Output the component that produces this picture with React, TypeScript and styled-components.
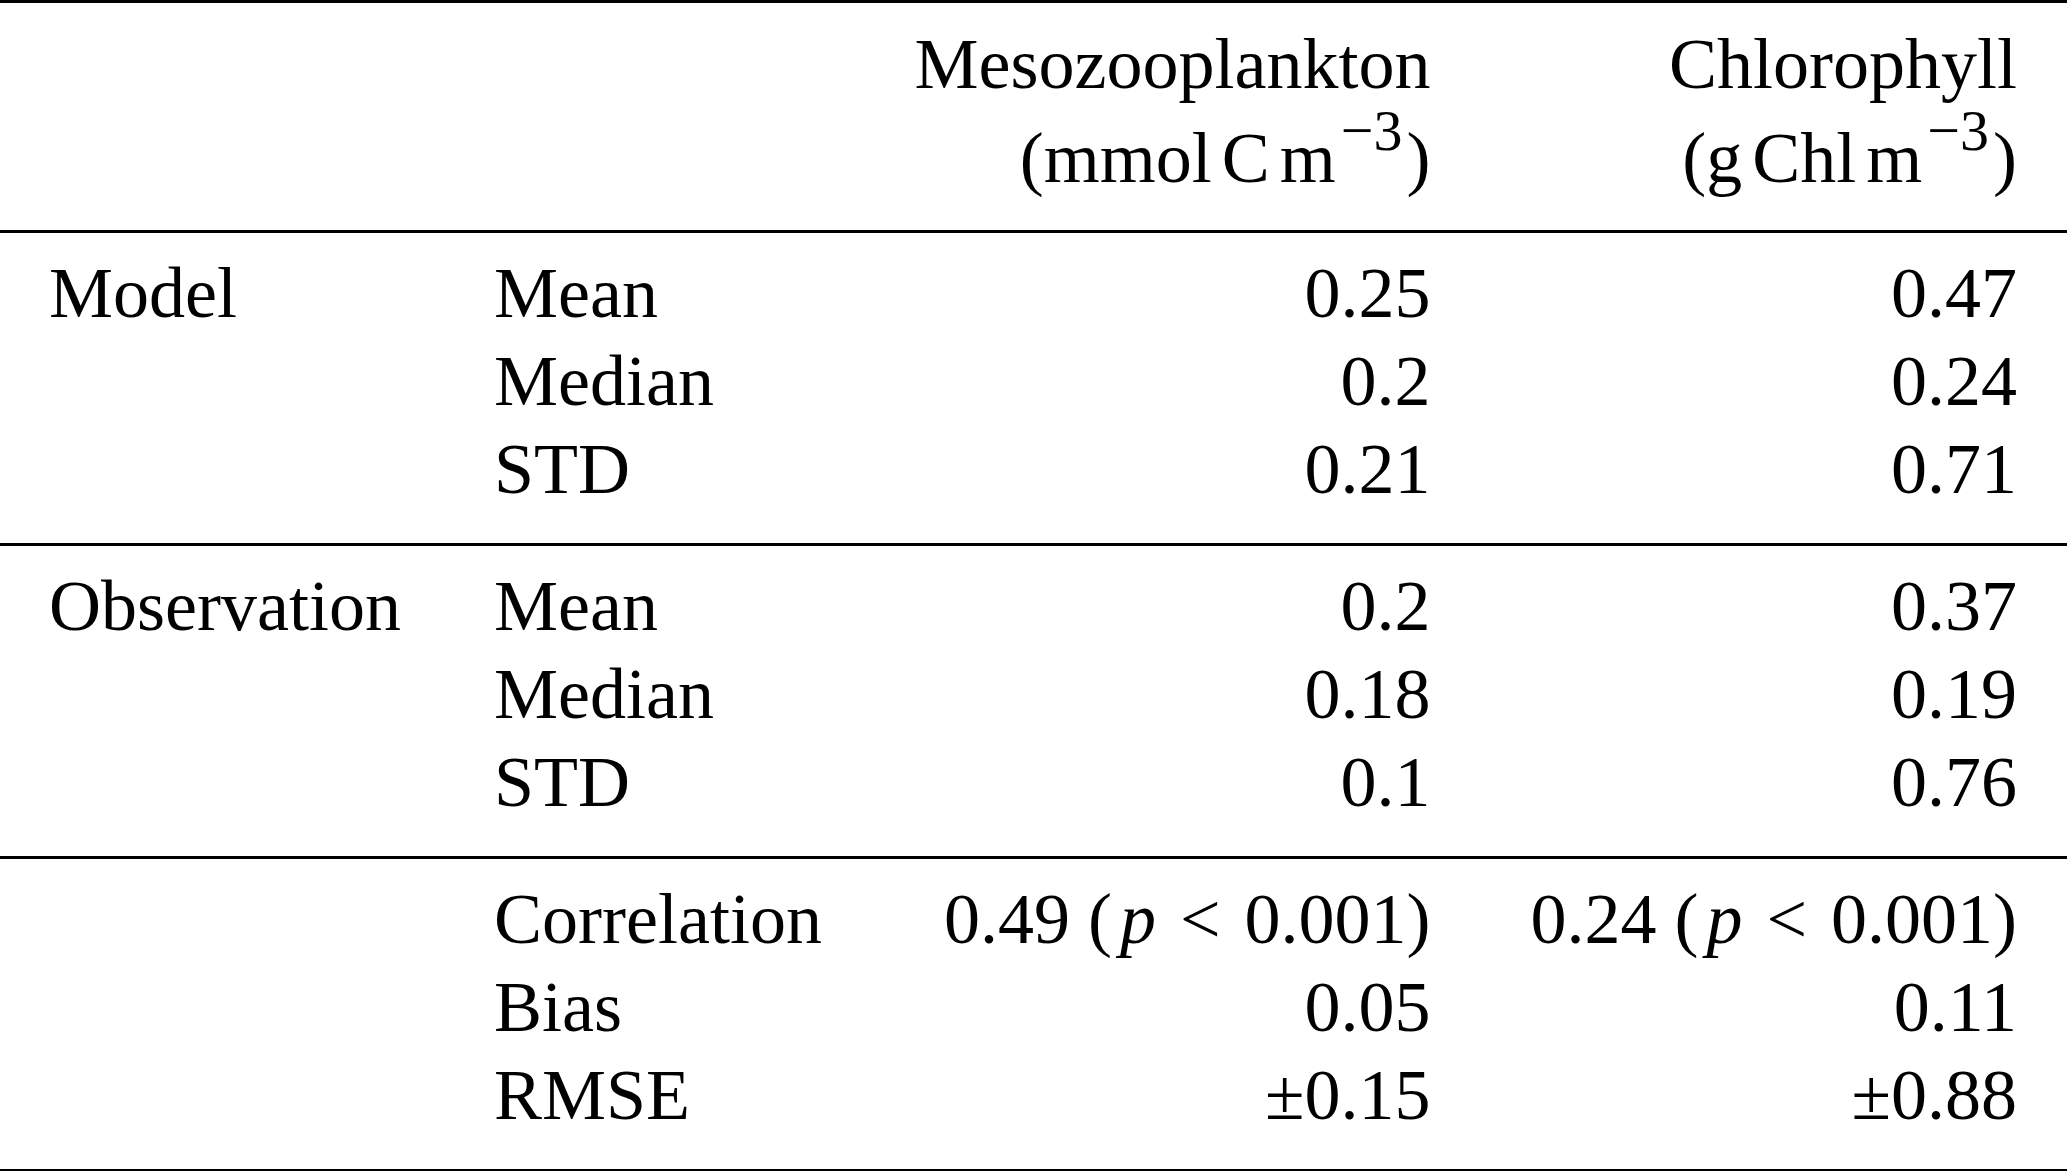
import React from 'react';
import styled, { createGlobalStyle } from 'styled-components';

const GlobalStyle = createGlobalStyle`
  html, body {
    margin: 0;
    padding: 0;
    background: #ffffff;
  }
  body {
    font-family: "Liberation Serif", "Times New Roman", serif;
    color: #000000;
  }
`;

const Table = styled.div`
  width: 100%;
  border-top: 3px solid #000;
  border-bottom: 3px solid #000;
  font-size: 72px;
`;

const Grid = styled.div<{ $head?: boolean }>`
  display: grid;
  grid-template-columns: 445px 350px 1fr 1fr;
  padding: ${({ $head }) => ($head ? '14px 50px 25px 49px' : '16px 50px 30px 49px')};
  line-height: ${({ $head }) => ($head ? '94px' : '88px')};
  & + & {
    border-top: 3px solid #000;
  }
`;

const Cell = styled.div<{ $right?: boolean }>`
  text-align: ${({ $right }) => ($right ? 'right' : 'left')};
  white-space: nowrap;
`;

const HeadLine = styled.div`
  display: block;
`;

const Unit = styled.span`
  margin-left: 10px;
`;

const Sup = styled.sup`
  font-size: 58px;
  line-height: 0;
  vertical-align: 32px;
  margin-left: 5px;
  margin-right: 4px;
`;

const Var = styled.i`
  font-style: italic;
  margin-left: 8px;
`;

const Rel = styled.span`
  margin: 0 24px;
  line-height: 0;
`;

type Row = { label: string; a: React.ReactNode; b: React.ReactNode };
type Section = { group: string; rows: Row[] };

const corr = (v: string) => (
  <>
    {v} (<Var>p</Var>
    <Rel>&lt;</Rel>0.001)
  </>
);

const sections: Section[] = [
  {
    group: 'Model',
    rows: [
      { label: 'Mean', a: '0.25', b: '0.47' },
      { label: 'Median', a: '0.2', b: '0.24' },
      { label: 'STD', a: '0.21', b: '0.71' },
    ],
  },
  {
    group: 'Observation',
    rows: [
      { label: 'Mean', a: '0.2', b: '0.37' },
      { label: 'Median', a: '0.18', b: '0.19' },
      { label: 'STD', a: '0.1', b: '0.76' },
    ],
  },
  {
    group: '',
    rows: [
      { label: 'Correlation', a: corr('0.49'), b: corr('0.24') },
      { label: 'Bias', a: '0.05', b: '0.11' },
      { label: 'RMSE', a: '±0.15', b: '±0.88' },
    ],
  },
];

export default function App() {
  return (
    <>
      <GlobalStyle />
      <Table>
        <Grid $head>
          <Cell />
          <Cell />
          <Cell $right>
            <HeadLine>Mesozooplankton</HeadLine>
            <HeadLine>
              (mmol<Unit>C</Unit>
              <Unit>m</Unit>
              <Sup>−3</Sup>)
            </HeadLine>
          </Cell>
          <Cell $right>
            <HeadLine>Chlorophyll</HeadLine>
            <HeadLine>
              (g<Unit>Chl</Unit>
              <Unit>m</Unit>
              <Sup>−3</Sup>)
            </HeadLine>
          </Cell>
        </Grid>
        {sections.map((s, i) => (
          <Grid key={i}>
            {s.rows.map((r, j) => (
              <React.Fragment key={j}>
                <Cell>{j === 0 ? s.group : ''}</Cell>
                <Cell>{r.label}</Cell>
                <Cell $right>{r.a}</Cell>
                <Cell $right>{r.b}</Cell>
              </React.Fragment>
            ))}
          </Grid>
        ))}
      </Table>
    </>
  );
}
